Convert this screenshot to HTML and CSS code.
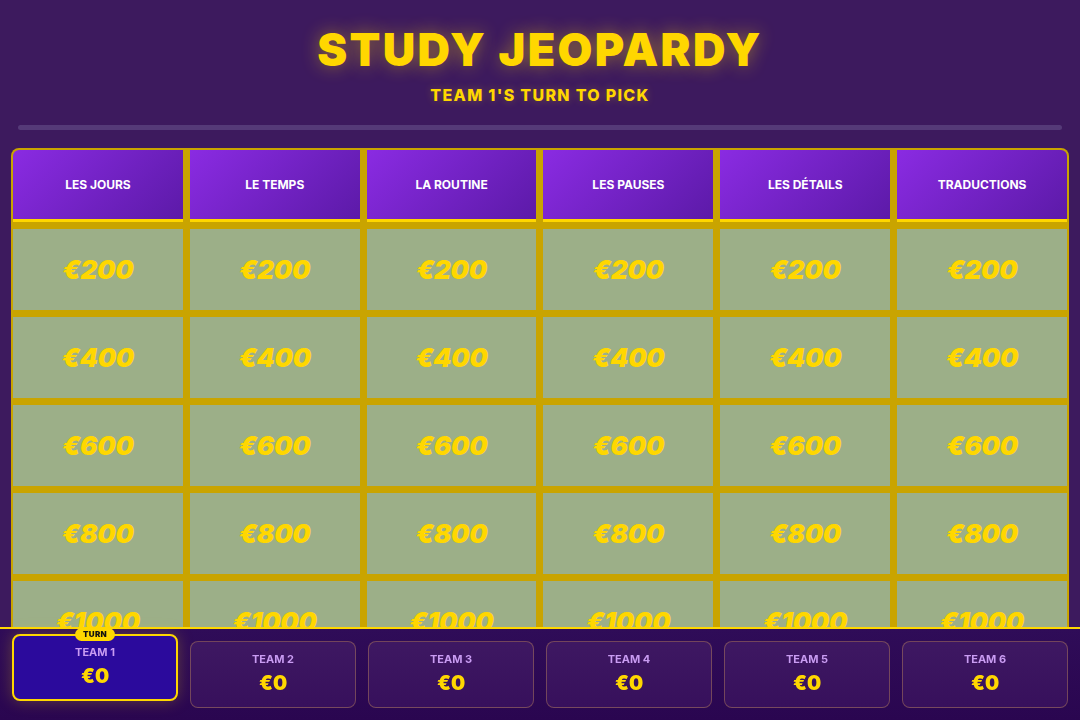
FILE: index.html
```html
<!DOCTYPE html>
<html lang="en">
<head>
<meta charset="utf-8">
<title>Study Jeopardy</title>
<link rel="stylesheet" href="styles.css">
</head>
<body>
<div class="app">
  <header class="top">
    <h1 class="title">STUDY JEOPARDY</h1>
    <p class="turn">TEAM 1'S TURN TO PICK</p>
    <div class="progress"></div>
  </header>
  <main class="board">
    <div class="cat">LES JOURS</div>
    <div class="cat">LE TEMPS</div>
    <div class="cat">LA ROUTINE</div>
    <div class="cat">LES PAUSES</div>
    <div class="cat">LES DÉTAILS</div>
    <div class="cat">TRADUCTIONS</div>

    <div class="cell">€200</div><div class="cell">€200</div><div class="cell">€200</div><div class="cell">€200</div><div class="cell">€200</div><div class="cell">€200</div>
    <div class="cell">€400</div><div class="cell">€400</div><div class="cell">€400</div><div class="cell">€400</div><div class="cell">€400</div><div class="cell">€400</div>
    <div class="cell">€600</div><div class="cell">€600</div><div class="cell">€600</div><div class="cell">€600</div><div class="cell">€600</div><div class="cell">€600</div>
    <div class="cell">€800</div><div class="cell">€800</div><div class="cell">€800</div><div class="cell">€800</div><div class="cell">€800</div><div class="cell">€800</div>
    <div class="cell">€1000</div><div class="cell">€1000</div><div class="cell">€1000</div><div class="cell">€1000</div><div class="cell">€1000</div><div class="cell">€1000</div>
  </main>
</div>
<footer class="teams">
  <div class="team active">
    <span class="badge">TURN</span>
    <div class="team-name">TEAM 1</div>
    <div class="score">€0</div>
  </div>
  <div class="team"><div class="team-name">TEAM 2</div><div class="score">€0</div></div>
  <div class="team"><div class="team-name">TEAM 3</div><div class="score">€0</div></div>
  <div class="team"><div class="team-name">TEAM 4</div><div class="score">€0</div></div>
  <div class="team"><div class="team-name">TEAM 5</div><div class="score">€0</div></div>
  <div class="team"><div class="team-name">TEAM 6</div><div class="score">€0</div></div>
</footer>
</body>
</html>
```

FILE: styles.css
```css
* { box-sizing: border-box; }

html, body {
  margin: 0;
  height: 100%;
}

body {
  background: #3d1a5e;
  font-family: "Inter", "Noto Sans", "DejaVu Sans", sans-serif;
  overflow: hidden;
}

.app {
  padding: 0 11px;
}

.top {
  text-align: center;
  padding-top: 27px;
}

.title {
  margin: 0;
  font-size: 45px;
  line-height: 46px;
  font-weight: 900;
  letter-spacing: 2.3px;
  color: #ffd700;
  text-shadow: 0 0 18px rgba(255, 215, 0, 0.45);
}

.turn {
  margin: 12px 0 0;
  font-size: 16px;
  line-height: 20px;
  font-weight: 800;
  letter-spacing: 1.3px;
  color: #ffd700;
  text-shadow: 0 0 8px rgba(255, 215, 0, 0.3);
}

.progress {
  margin: 20px 7px 0;
  height: 5px;
  border-radius: 3px;
  background: #553a78;
}

.board {
  margin-top: 18px;
  display: grid;
  grid-template-columns: repeat(6, 1fr);
  grid-template-rows: 72px repeat(5, 81px);
  gap: 7px;
  padding: 2px;
  background: #c9a400;
  border-radius: 8px;
}

.cat {
  display: flex;
  align-items: center;
  justify-content: center;
  background: linear-gradient(135deg, #8a2be2 0%, #5c1aa8 100%);
  border-bottom: 3px solid #ffd700;
  color: #ffffff;
  font-size: 12px;
  font-weight: 700;
}

.board .cat:first-child { border-top-left-radius: 6px; }
.board .cat:nth-child(6) { border-top-right-radius: 6px; }

.cell {
  display: flex;
  align-items: center;
  justify-content: center;
  background: #9caf88;
  color: #ffd700;
  font-size: 26px;
  font-weight: 900;
  font-style: italic;
  letter-spacing: -0.3px;
}

.teams {
  position: fixed;
  left: 0;
  right: 0;
  bottom: 0;
  height: 93px;
  border-top: 2px solid #ffd700;
  background: linear-gradient(180deg, #2f0c58 0%, #2a0650 100%);
  display: grid;
  grid-template-columns: repeat(6, 1fr);
  gap: 12px;
  padding: 12px 12px;
}

.team {
  position: relative;
  height: 67px;
  border: 1px solid rgba(205, 150, 90, 0.4);
  border-radius: 8px;
  background: linear-gradient(180deg, #3e1862 0%, #37105c 100%);
  text-align: center;
  padding-top: 10px;
}

.team.active {
  transform: translateY(-7px);
  border: 2px solid #ffd700;
  background: #2b0a9c;
  padding-top: 9px;
  box-shadow: 0 0 16px rgba(255, 215, 0, 0.25);
}

.team-name {
  font-size: 11px;
  line-height: 14px;
  font-weight: 700;
  color: #c99cf2;
}

.score {
  margin-top: 5px;
  font-size: 20px;
  line-height: 24px;
  font-weight: 900;
  color: #ffd700;
}

.badge {
  position: absolute;
  top: -8px;
  left: 50%;
  transform: translateX(-50%);
  background: #ffd700;
  color: #111111;
  font-size: 8px;
  line-height: 13px;
  font-weight: 900;
  padding: 0 8px;
  border-radius: 7px;
  letter-spacing: 0.3px;
}
```
